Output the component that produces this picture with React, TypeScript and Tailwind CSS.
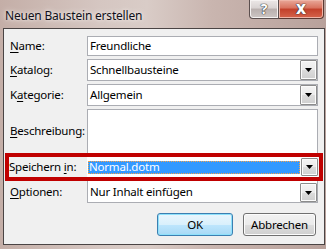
import React from "react";

const font = { fontFamily: '"Noto Sans", sans-serif' };

function U({ c }: { c: string }) {
  return <span className="underline underline-offset-[2px] decoration-1">{c}</span>;
}

function DropBtn() {
  return (
    <div className="w-[17px] h-full border border-[#8c8c8c] rounded-[1px] bg-[linear-gradient(180deg,#f4f4f4_0%,#ebebeb_50%,#dcdcdc_51%,#cfcfcf_100%)] flex items-center justify-center shadow-[inset_0_0_0_1px_#fbfbfb]">
      <svg width="7" height="4" viewBox="0 0 7 4">
        <path d="M0 0H7L3.5 4Z" fill="#000" />
      </svg>
    </div>
  );
}

function Combo({ text, h }: { text: string; h: string }) {
  return (
    <div className={`flex-1 ${h} border border-[#abadb3] bg-white flex items-stretch`}>
      <div className="flex-1 flex items-center pl-[2px] text-[11.5px] tracking-[-0.2px] text-black">{text}</div>
      <div>
        <DropBtn />
      </div>
    </div>
  );
}

function Row({ label, children, h }: { label: React.ReactNode; children: React.ReactNode; h: string }) {
  return (
    <div className={`flex items-center ${h}`}>
      <div className="w-[77px] text-[11.5px] tracking-[-0.2px] text-black whitespace-nowrap">{label}</div>
      {children}
    </div>
  );
}

export default function App() {
  return (
    <div
      className="w-[326px] h-[249px] flex flex-col bg-[linear-gradient(90deg,#c4aea7_0%,#d5c6c1_30%,#d9ccc7_45%,#c9b5af_65%,#b8a19b_100%)] pl-[3px] pr-[1px] pb-[4px]"
      style={font}
    >
      {/* title bar */}
      <div className="h-[28px] flex items-start relative">
        <div className="pl-[2px] pt-[7px] text-[12px] tracking-[-0.2px] text-[#10101a] [text-shadow:0_0_6px_#f2ece9,0_0_3px_#f2ece9]">
          Neuen Baustein erstellen
        </div>
        <div className="absolute right-[1px] top-0 flex">
          <div className="w-[30px] h-[19px] border border-[#5b4f4e] border-t-0 rounded-bl-[4px] bg-[linear-gradient(180deg,#ece8e7_0%,#d9d3d2_45%,#b9b0ae_50%,#cdc6c4_100%)] shadow-[inset_0_0_0_1px_#f5f2f1] flex items-center justify-center">
            <span className="text-[14px] font-bold text-white leading-none [text-shadow:0_0_1px_#333,0_0_1px_#333,0_0_1px_#333]">?</span>
          </div>
          <div className="w-[45px] h-[19px] border border-[#5b3a33] border-t-0 border-l-0 rounded-br-[4px] bg-[linear-gradient(180deg,#e9a899_0%,#d8715d_45%,#c2402a_50%,#d5644b_100%)] shadow-[inset_0_0_0_1px_#eeb4a6] flex items-center justify-center">
            <span className="text-[14px] font-black text-white leading-none [text-shadow:0_0_1px_#333,0_0_1px_#333,0_0_1px_#333]">X</span>
          </div>
        </div>
      </div>

      {/* client */}
      <div className="flex-1 border border-[#4a4444] bg-[#f0f0f0] flex flex-col px-[6px] pt-[7px] pb-[8px]">
        <Row label={<><U c="N" />ame:</>} h="h-[20px]">
          <div className="flex-1 h-[20px] border border-[#abadb3] bg-white flex items-center pl-[2px] text-[11.5px] tracking-[-0.2px] text-black">
            Freundliche
          </div>
        </Row>
        <div className="h-[3px]" />
        <Row label={<><U c="K" />atalog:</>} h="h-[22px]">
          <Combo text="Schnellbausteine" h="h-[22px]" />
        </Row>
        <div className="h-[3px]" />
        <Row label={<>K<U c="a" />tegorie:</>} h="h-[22px]">
          <Combo text="Allgemein" h="h-[22px]" />
        </Row>
        <div className="h-[3px]" />
        <Row label={<><U c="B" />eschreibung:</>} h="h-[44px]">
          <div className="flex-1 h-[44px] border border-[#abadb3] border-b-0 bg-white" />
        </Row>

        {/* highlighted row */}
        <div className="mx-[-5px] h-[28px] border-4 border-[#c00000] flex items-stretch pr-[1px]">
          <div className="w-[78px] flex items-center text-[11.5px] tracking-[-0.2px] text-black whitespace-nowrap">
            Speichern&nbsp;<U c="i" />n:
          </div>
          <div className="flex-1 bg-white flex items-stretch">
            <div className="flex-1 flex items-center pl-[1px] pr-[1px]">
              <div className="w-full h-[13px] bg-[#3399ff] outline outline-1 outline-dotted outline-[#f7a24a] -outline-offset-1 flex items-center pl-[1px] text-[11.5px] tracking-[-0.2px] text-white">
                Normal.dotm
              </div>
            </div>
            <div className="py-[1px]">
              <DropBtn />
            </div>
          </div>
        </div>

        <Row label={<><U c="O" />ptionen:</>} h="h-[22px]">
          <div className="flex-1 h-[22px] border border-[#abadb3] border-t-0 bg-white flex items-stretch">
            <div className="flex-1 flex items-center pl-[2px] text-[11.5px] tracking-[-0.2px] text-black">Nur Inhalt einfügen</div>
            <div className="pt-[2px]">
              <DropBtn />
            </div>
          </div>
        </Row>

        <div className="mt-[10px] flex justify-end gap-[10px] pr-[2px]">
          <div className="w-[76px] h-[23px] rounded-[3px] border border-[#3c7fb1] bg-[linear-gradient(180deg,#eaf6fd_0%,#d9f0fc_50%,#bee6fd_51%,#a7d9f5_100%)] shadow-[inset_0_0_0_1px_#8ee1fb] flex items-center justify-center text-[11.5px] tracking-[-0.2px] text-black">
            OK
          </div>
          <div className="w-[73px] h-[23px] rounded-[3px] border border-[#707070] bg-[linear-gradient(180deg,#f2f2f2_0%,#ebebeb_50%,#dddddd_51%,#cfcfcf_100%)] shadow-[inset_0_0_0_1px_#fcfcfc] flex items-center justify-center text-[11.5px] tracking-[-0.2px] text-black">
            Abbrechen
          </div>
        </div>
      </div>
    </div>
  );
}
